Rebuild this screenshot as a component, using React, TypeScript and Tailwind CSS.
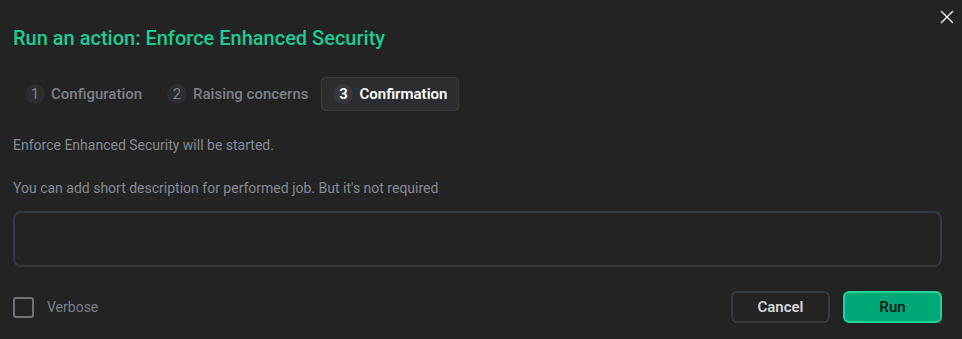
import React from "react";

const steps = [
  { n: 1, label: "Configuration" },
  { n: 2, label: "Raising concerns" },
  { n: 3, label: "Confirmation" },
];

const App = () => {
  return (
    <div className="w-[962px] h-[339px] bg-[#232323] relative font-['Roboto',sans-serif] overflow-hidden">
      <button className="absolute right-[8px] top-[10px] text-white">
        <svg width="14" height="14" viewBox="0 0 14 14" fill="none" stroke="currentColor" strokeWidth="1.3">
          <path d="M1 1L13 13M13 1L1 13" />
        </svg>
      </button>

      <div className="px-[13px] pt-[26px]">
        <h1 className="text-[20px] leading-[24px] font-medium text-[#1ecb92]">
          Run an action: Enforce Enhanced Security
        </h1>

        <div className="mt-[27px] flex gap-[1px]">
          {steps.map((s) => {
            const active = s.n === 3;
            return (
              <div
                key={s.n}
                className={
                  active
                    ? "flex items-center gap-[6px] h-[34px] px-[11px] rounded-[4px] border border-[#383b41] bg-[#2b2d31]"
                    : "flex items-center gap-[6px] h-[34px] px-[11px] rounded-[4px] border border-transparent"
                }
              >
                <span
                  className={
                    active
                      ? "w-[20px] h-[20px] rounded-full bg-[#36383d] flex items-center justify-center text-[15px] font-semibold text-white"
                      : "w-[20px] h-[20px] rounded-full bg-[#2c2d30] flex items-center justify-center text-[15px] text-[#7c8088]"
                  }
                >
                  {s.n}
                </span>
                <span
                  className={
                    active
                      ? "text-[15px] font-semibold text-white"
                      : "text-[15px] font-medium text-[#7c8088]"
                  }
                >
                  {s.label}
                </span>
              </div>
            );
          })}
        </div>

        <p className="mt-[25px] text-[14px] leading-[18px] text-[#858a93]">
          Enforce Enhanced Security will be started.
        </p>
        <p className="mt-[25px] text-[14px] leading-[18px] text-[#858a93]">
          You can add short description for performed job. But it's not required
        </p>

        <textarea className="mt-[14px] block w-[929px] h-[56px] rounded-[8px] border-2 border-[#343a42] bg-transparent resize-none outline-none text-white px-3 py-2 text-[14px]" />

        <div className="mt-[24px] flex items-center justify-between w-[929px]">
          <label className="flex items-center gap-[13px]">
            <span className="w-[21px] h-[21px] rounded-[3px] border-2 border-[#6f7379]" />
            <span className="text-[14px] text-[#7c8088]">Verbose</span>
          </label>
          <div className="flex gap-[13px]">
            <button className="w-[99px] h-[32px] rounded-[6px] border-2 border-[#343a42] text-[15px] font-semibold text-[#d5d7db]">
              Cancel
            </button>
            <button className="w-[99px] h-[32px] rounded-[6px] border-2 border-[#1ed49b] bg-[#00a877] text-[15px] font-semibold text-[#0b1d16]">
              Run
            </button>
          </div>
        </div>
      </div>
    </div>
  );
};

export default App;
